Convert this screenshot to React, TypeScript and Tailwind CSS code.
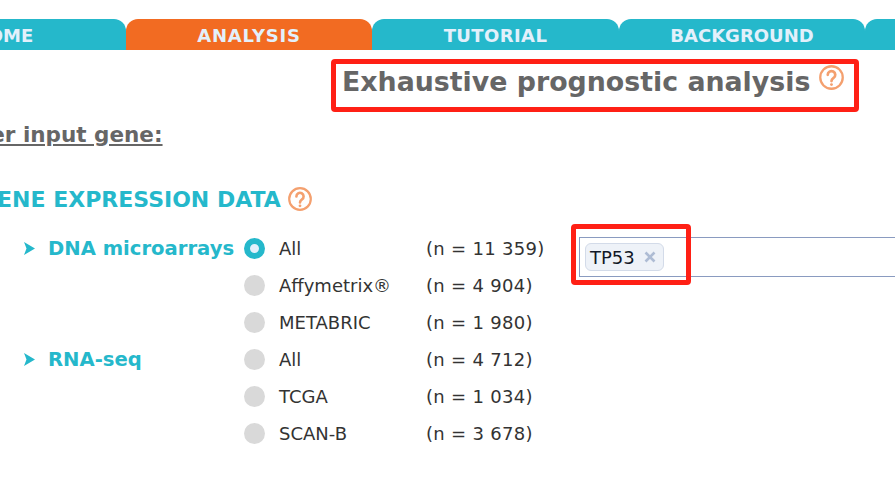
const font = { fontFamily: '"DejaVu Sans", Verdana, sans-serif' };

function Help({ size }: { size: number }) {
  return (
    <svg width={size} height={size} viewBox="0 0 24 24" fill="none" stroke="#f4a06f" strokeWidth="2.2" strokeLinecap="round" className="shrink-0">
      <circle cx="12" cy="12" r="10.8" />
      <path d="M8.4 9.4a3.6 3.6 0 1 1 5.6 3c-1.3.9-2 1.5-2 3" strokeWidth="2.6" />
      <circle cx="12" cy="18.8" r="1.4" fill="#f4a06f" stroke="none" />
    </svg>
  );
}

function Tab({ label, active, className }: { label: string; active?: boolean; className: string }) {
  return (
    <div className={`h-[31px] pt-[1px] rounded-t-[12px] flex items-center justify-center text-[18px] font-bold text-[#e3f0fb] shrink-0 ${active ? "bg-[#f26b22]" : "bg-[#25b8cb]"} ${className}`}>
      {label}
    </div>
  );
}

function Radio({ on }: { on?: boolean }) {
  return on ? (
    <span className="w-[21px] h-[21px] rounded-full border-[6px] border-[#25b8cb] bg-[#e3f0fb] shrink-0" />
  ) : (
    <span className="w-[21px] h-[21px] rounded-full bg-[#d9d9d9] shrink-0" />
  );
}

const rows = [
  { group: "DNA microarrays", label: "All", n: "(n = 11 359)", on: true },
  { label: "Affymetrix®", n: "(n = 4 904)" },
  { label: "METABRIC", n: "(n = 1 980)" },
  { group: "RNA-seq", label: "All", n: "(n = 4 712)" },
  { label: "TCGA", n: "(n = 1 034)" },
  { label: "SCAN-B", n: "(n = 3 678)" },
];

export default function App() {
  return (
    <div className="w-[895px] h-[491px] overflow-hidden bg-white relative" style={font}>
      <div className="flex pt-[19px] ml-[-120px] w-[1300px]">
        <Tab label="HOME" className="w-[246px]" />
        <Tab label="ANALYSIS" active className="w-[246px] tracking-[0.8px]" />
        <Tab label="TUTORIAL" className="w-[247px] tracking-[0.4px]" />
        <Tab label="BACKGROUND" className="w-[246px]" />
        <Tab label="" className="w-[246px]" />
      </div>

      <div className="flex justify-end pr-[36px] mt-[9px]">
        <div className="relative w-[528px] h-[53px] flex items-start pl-[6px] pt-[1px] gap-[9px] border-[5px] border-[#ff2015] rounded-[4px]">
          <h1 className="text-[26.8px] leading-[34px] font-bold text-[#666666] whitespace-nowrap">Exhaustive prognostic analysis</h1>
          <span><Help size={25} /></span>
        </div>
      </div>

      <p className="ml-[-50px] mt-[9px] text-[21.5px] leading-[28px] font-bold text-[#666666] underline whitespace-nowrap">Enter input gene:</p>

      <div className="flex items-center gap-[7px] ml-[-21px] mt-[36px] h-[28px]">
        <h2 className="text-[22px] font-bold text-[#25b8cb] whitespace-nowrap">GENE EXPRESSION DATA</h2>
        <Help size={24} />
      </div>

      <div className="flex mt-[17px]">
        <div className="w-[572px] shrink-0 flex flex-col">
          {rows.map((r, i) => (
            <div key={i} className="h-[37px] flex items-center">
              <div className="w-[244px] shrink-0 pl-[24px] flex items-center gap-[13px]">
                {r.group && (
                  <>
                    <svg width="11" height="13" viewBox="0 0 11 13" className="shrink-0"><path d="M0 0 L11 6.5 L0 13 L2.5 6.5 Z" fill="#25b8cb" /></svg>
                    <span className="text-[19.6px] font-bold text-[#25b8cb] whitespace-nowrap">{r.group}</span>
                  </>
                )}
              </div>
              <Radio on={r.on} />
              <span className="ml-[14px] w-[147px] text-[18px] text-[#333333] whitespace-nowrap">{r.label}</span>
              <span className="text-[18px] tracking-[0.3px] text-[#333333] whitespace-nowrap">{r.n}</span>
            </div>
          ))}
        </div>
        <div className="relative -mt-[6px] w-[323px] h-[61px] shrink-0 self-start">
          <div className="absolute left-[7px] top-[13px] w-[400px] h-[40px] border border-[#8a9bc0] flex items-center pl-[5px]">
            <span className="w-[79px] h-[28px] pl-[4px] flex items-center gap-[9px] bg-[#eef2f8] border border-[#d3dbe9] rounded-[6px] text-[18px] text-[#111827]">
              TP53
              <svg width="12" height="12" viewBox="0 0 12 12" stroke="#aebcd4" strokeWidth="2.6"><path d="M1.5 1.5 L10.5 10.5 M10.5 1.5 L1.5 10.5" /></svg>
            </span>
          </div>
          <div className="absolute left-[-1px] top-0 w-[120px] h-[61px] border-[5px] border-[#ff2015] rounded-[4px]" />
        </div>
      </div>
    </div>
  );
}
